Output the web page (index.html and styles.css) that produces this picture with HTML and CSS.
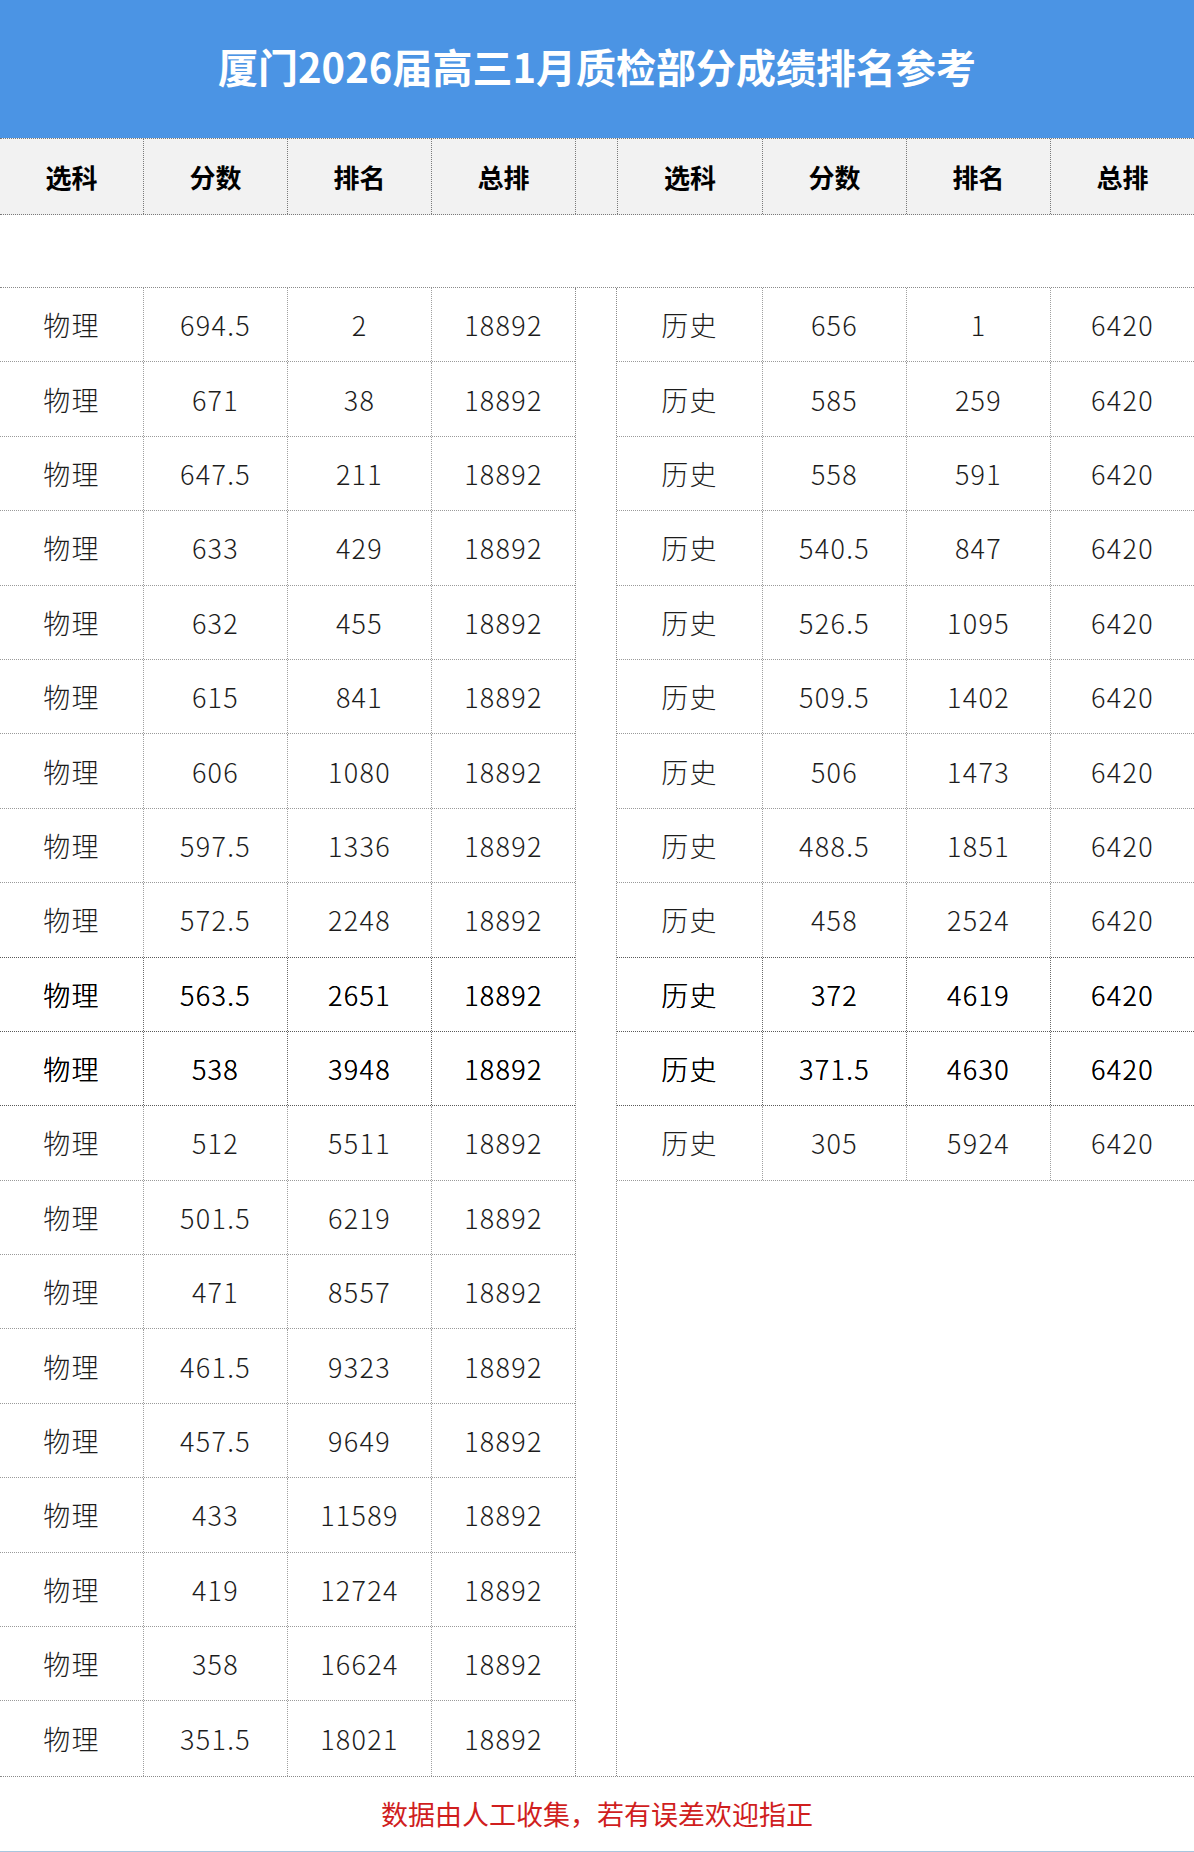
FILE: index.html
```html
<!DOCTYPE html>
<html lang="zh-CN">
<head>
<meta charset="utf-8">
<title>厦门2026届高三1月质检部分成绩排名参考</title>
<link rel="stylesheet" href="styles.css">
</head>
<body>
<div class="page">
  <div class="title">厦门2026届高三1月质检部分成绩排名参考</div>
  <div class="head">
    <div class="hc first">选科</div>
    <div class="hc">分数</div>
    <div class="hc">排名</div>
    <div class="hc">总排</div>
    <div class="hc gapc"></div>
    <div class="hc">选科</div>
    <div class="hc">分数</div>
    <div class="hc">排名</div>
    <div class="hc">总排</div>
  </div>
  <div class="spacer"></div>
  <div class="body">
    <div class="tbl left">
      <div class="row"><div class="c">物理</div><div class="c">694.5</div><div class="c">2</div><div class="c">18892</div></div>
      <div class="row"><div class="c">物理</div><div class="c">671</div><div class="c">38</div><div class="c">18892</div></div>
      <div class="row"><div class="c">物理</div><div class="c">647.5</div><div class="c">211</div><div class="c">18892</div></div>
      <div class="row"><div class="c">物理</div><div class="c">633</div><div class="c">429</div><div class="c">18892</div></div>
      <div class="row"><div class="c">物理</div><div class="c">632</div><div class="c">455</div><div class="c">18892</div></div>
      <div class="row"><div class="c">物理</div><div class="c">615</div><div class="c">841</div><div class="c">18892</div></div>
      <div class="row"><div class="c">物理</div><div class="c">606</div><div class="c">1080</div><div class="c">18892</div></div>
      <div class="row"><div class="c">物理</div><div class="c">597.5</div><div class="c">1336</div><div class="c">18892</div></div>
      <div class="row pre"><div class="c">物理</div><div class="c">572.5</div><div class="c">2248</div><div class="c">18892</div></div>
      <div class="row hl"><div class="c">物理</div><div class="c">563.5</div><div class="c">2651</div><div class="c">18892</div></div>
      <div class="row hl"><div class="c">物理</div><div class="c">538</div><div class="c">3948</div><div class="c">18892</div></div>
      <div class="row"><div class="c">物理</div><div class="c">512</div><div class="c">5511</div><div class="c">18892</div></div>
      <div class="row"><div class="c">物理</div><div class="c">501.5</div><div class="c">6219</div><div class="c">18892</div></div>
      <div class="row"><div class="c">物理</div><div class="c">471</div><div class="c">8557</div><div class="c">18892</div></div>
      <div class="row"><div class="c">物理</div><div class="c">461.5</div><div class="c">9323</div><div class="c">18892</div></div>
      <div class="row"><div class="c">物理</div><div class="c">457.5</div><div class="c">9649</div><div class="c">18892</div></div>
      <div class="row"><div class="c">物理</div><div class="c">433</div><div class="c">11589</div><div class="c">18892</div></div>
      <div class="row"><div class="c">物理</div><div class="c">419</div><div class="c">12724</div><div class="c">18892</div></div>
      <div class="row"><div class="c">物理</div><div class="c">358</div><div class="c">16624</div><div class="c">18892</div></div>
      <div class="row last"><div class="c">物理</div><div class="c">351.5</div><div class="c">18021</div><div class="c">18892</div></div>
    </div>
    <div class="gap"></div>
    <div class="tbl right">
      <div class="row"><div class="c">历史</div><div class="c">656</div><div class="c">1</div><div class="c">6420</div></div>
      <div class="row"><div class="c">历史</div><div class="c">585</div><div class="c">259</div><div class="c">6420</div></div>
      <div class="row"><div class="c">历史</div><div class="c">558</div><div class="c">591</div><div class="c">6420</div></div>
      <div class="row"><div class="c">历史</div><div class="c">540.5</div><div class="c">847</div><div class="c">6420</div></div>
      <div class="row"><div class="c">历史</div><div class="c">526.5</div><div class="c">1095</div><div class="c">6420</div></div>
      <div class="row"><div class="c">历史</div><div class="c">509.5</div><div class="c">1402</div><div class="c">6420</div></div>
      <div class="row"><div class="c">历史</div><div class="c">506</div><div class="c">1473</div><div class="c">6420</div></div>
      <div class="row"><div class="c">历史</div><div class="c">488.5</div><div class="c">1851</div><div class="c">6420</div></div>
      <div class="row pre"><div class="c">历史</div><div class="c">458</div><div class="c">2524</div><div class="c">6420</div></div>
      <div class="row hl"><div class="c">历史</div><div class="c">372</div><div class="c">4619</div><div class="c">6420</div></div>
      <div class="row hl"><div class="c">历史</div><div class="c">371.5</div><div class="c">4630</div><div class="c">6420</div></div>
      <div class="row"><div class="c">历史</div><div class="c">305</div><div class="c">5924</div><div class="c">6420</div></div>
    </div>
  </div>
  <div class="footer">数据由人工收集，若有误差欢迎指正</div>
</div>
</body>
</html>
```
FILE: styles.css
```css
* { box-sizing: border-box; }
html, body { margin: 0; padding: 0; background: #ffffff; }
body {
  font-family: "Noto Sans CJK SC", "Noto Sans", sans-serif;
  color: #1a1a1a;
}
.page { width: 1194px; }

.title {
  height: 138px;
  padding-bottom: 6px;
  background: #4b94e4;
  color: #ffffff;
  font-size: 40px;
  font-weight: 700;
  display: flex;
  align-items: center;
  justify-content: center;
}

.head {
  display: grid;
  grid-template-columns: 143px 144px 144px 144px 42px 145px 144px 144px 144px;
  height: 77px;
  background: #f2f2f2;
  border-top: 1px dotted #7a7a7a;
  border-bottom: 1px dotted #7a7a7a;
}
.hc {
  display: flex;
  align-items: center;
  justify-content: center;
  font-size: 26px;
  font-weight: 700;
  color: #000000;
  border-left: 1px dotted #7a7a7a;
}
.hc.first { border-left: none; }

.spacer {
  height: 73px;
  border-bottom: 1px dotted #8a8a8a;
}

.body {
  display: flex;
  align-items: flex-start;
  border-bottom: 1px dotted #8a8a8a;
}
.tbl { display: flex; flex-direction: column; }
.tbl.left { width: 575px; }
.tbl.right { width: 577px; }
.gap {
  width: 42px;
  align-self: stretch;
  border-left: 1px dotted #8a8a8a;
  border-right: 1px dotted #8a8a8a;
}
.row {
  display: grid;
  height: 74.4px;
  border-bottom: 1px dotted #9a9a9a;
}
.left .row { grid-template-columns: 143px 144px 144px 144px; }
.right .row { grid-template-columns: 145px 144px 144px 144px; }
.left .row.last { border-bottom: none; }
.c {
  display: flex;
  align-items: center;
  justify-content: center;
  font-size: 27px;
  font-weight: 300;
  letter-spacing: 1.3px;
  color: #1c1c1c;
  border-left: 1px dotted #a0a0a0;
}
.c:first-child { border-left: none; }

.row.pre { border-bottom-color: #5a5a5a; }
.row.hl { border-bottom-color: #5a5a5a; }
.row.hl .c { color: #000000; border-left-color: #6a6a6a; text-shadow: 0 0 0.4px #000; }

.footer {
  height: 76px;
  display: flex;
  align-items: center;
  justify-content: center;
  font-size: 27px;
  color: #d01e1e;
  border-bottom: 2px solid #a9c6de;
}
```
